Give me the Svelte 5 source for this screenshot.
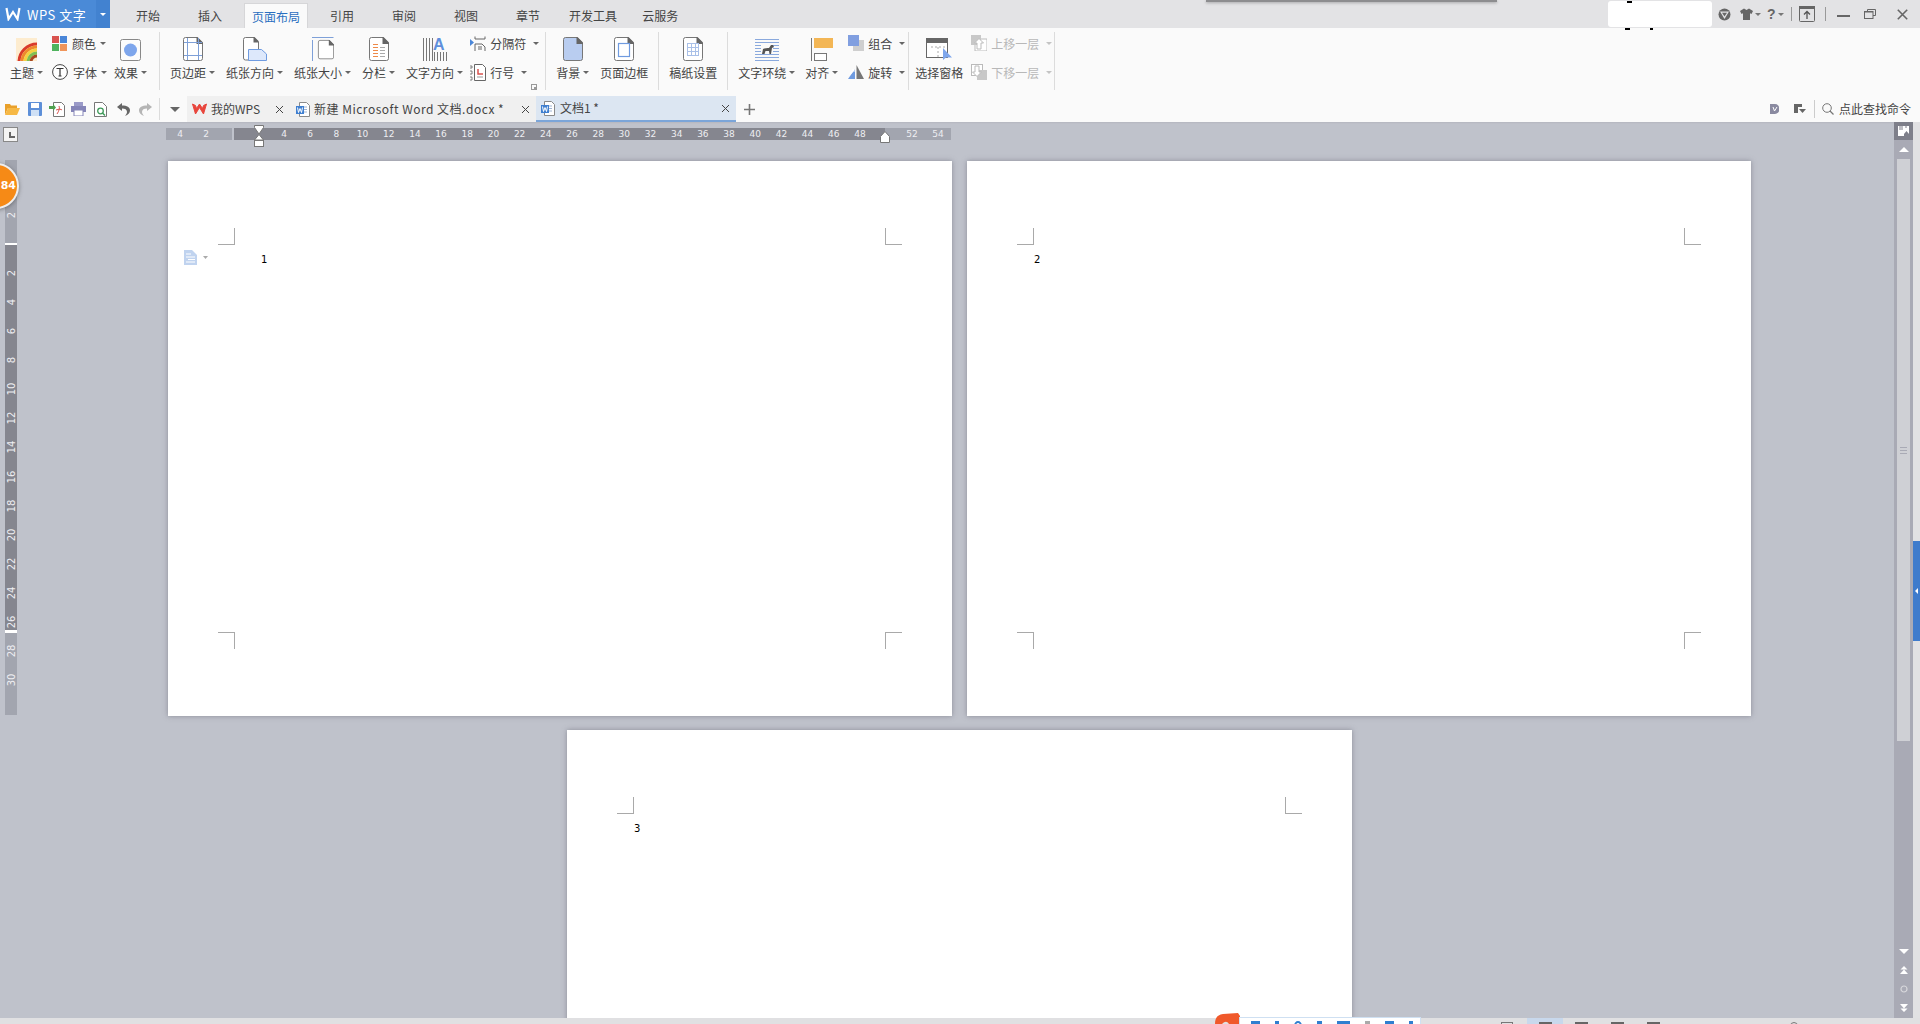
<script>
  const hNums = [
    [180,'4'],[206,'2'],
    ...Array.from({length:23},(_,i)=>[284+i*26.18, String(4+i*2)]),
    [912,'52'],[938,'54']
  ];
  const vNums = [
    [215,'2'],
    ...Array.from({length:15},(_,i)=>[273+i*29.08, String(2+i*2)])
  ];
  const tabs = [
    {t:'开始'},{t:'插入'},{t:'页面布局',cls:'active'},{t:'引用'},{t:'审阅'},{t:'视图'},{t:'章节'},{t:'开发工具',cls:'dev'},{t:'云服务',cls:'cloud'}
  ];
  const pages = [{n:1,cls:'indent'},{n:2,cls:''}];
</script>

{#snippet caret(cls = '')}
  <i class="caret {cls}"></i>
{/snippet}

{#snippet doc(fill = '#fff')}
  <path d="M.5 2.500a2 2 0 0 1 2-2H14l5.500 5.500v15.500a2 2 0 0 1-2 2h-15a2 2 0 0 1-2-2z" fill={fill} stroke="#777"/>
  <path d="M13.500 0h1l5.500 5.500v1.500h-6.500z" fill="#666"/>
{/snippet}

{#snippet wdoc()}
  <svg width="14" height="15" viewBox="0 0 14 15">
    <path d="M3.500.5h7l3 3v11h-10z" fill="#fff" stroke="#8a8a8a"/>
    <path d="M6 5h5M8 7.500h3M8 10h3" stroke="#9fb4d4"/>
    <rect y="4" width="8" height="8" fill="#3f7fd0"/>
    <path d="M1.500 5.500l1 5 1.500-4 1.500 4 1-5" stroke="#fff" fill="none"/>
  </svg>
{/snippet}

{#snippet x()}
  <svg class="close" width="9" height="9" viewBox="0 0 9 9"><path d="M1 1l7 7M8 1l-7 7" stroke="#444" fill="none"/></svg>
{/snippet}

<div class="app">
  <div class="float-edge"></div>

  <header class="title">
    <div class="logo">
      <svg width="16" height="14" viewBox="0 0 16 14"><path d="M1.500 1l2 11 4.500-7 4.500 7 2-11" fill="none" stroke="#fff" stroke-width="2.200"/></svg>
      <span>WPS 文字</span>
    </div>
    <div class="logo-drop"><i class="caret white"></i></div>
    <nav class="tabs">
      {#each tabs as tab}
        <div class="tab {tab.cls ?? ''}">{tab.t}</div>
      {/each}
    </nav>
    <div class="winbtns">
      <div class="blob"><b class="speck a"></b><b class="speck b"></b><b class="speck c"></b></div>
      <svg class="w-shield" width="13" height="13" viewBox="0 0 13 13"><circle cx="6.500" cy="6.500" r="6" fill="#666"/><path d="M2 3.500h9L6.500 11z" fill="#e3e3e5"/><path d="M4 4.800h5L6.500 8.500z" fill="#666"/></svg>
      <svg class="w-shirt" width="13" height="12" viewBox="0 0 13 12"><path d="M4 .5L0 3l1.500 3L3 5.200V12h7V5.200L11.500 6 13 3 9 .5 6.500 2z" fill="#666"/></svg>
      <i class="caret sm"></i>
      <span class="help">?</span>
      <i class="caret sm"></i>
      <span class="wsep first"></span>
      <svg class="w-up" width="16" height="16" viewBox="0 0 16 16"><rect x=".5" y=".5" width="15" height="15" rx="1" fill="none" stroke="#666"/><rect width="16" height="3" fill="#666"/><path d="M8 13V6M5 8.500L8 5.500l3 3" stroke="#555" stroke-width="1.300" fill="none"/></svg>
      <span class="wsep"></span>
      <svg class="w-min" width="13" height="2" viewBox="0 0 13 2"><rect width="13" height="2" fill="#666"/></svg>
      <svg class="w-rest" width="12" height="10" viewBox="0 0 12 10"><path d="M3.500 2.500V.5h8v6H9" fill="none" stroke="#666"/><rect x=".5" y="2.500" width="8.500" height="7" fill="none" stroke="#666"/><rect x="1" y="2" width="8" height="1.500" fill="#666"/></svg>
      <svg class="w-x" width="11" height="11" viewBox="0 0 11 11"><path d="M.8.800l9.400 9.400M10.200.8L.8 10.200" stroke="#666" stroke-width="1.600" fill="none"/></svg>
    </div>
  </header>

  <section class="ribbon">
    <div class="group g1">
      <div class="big">
        <div class="ic">
          <svg width="21" height="23" viewBox="0 0 21 23"><rect width="21" height="23" fill="#fdeccf"/><g fill="none" stroke-width="3"><circle cx="21" cy="24" r="18" stroke="#d93b2b"/><circle cx="21" cy="24" r="15" stroke="#ee8a2c"/><circle cx="21" cy="24" r="12" stroke="#f4d13f"/><circle cx="21" cy="24" r="9" stroke="#7fbf50"/><circle cx="21" cy="24" r="6" stroke="#a8481f"/></g></svg>
        </div>
        <div class="lab"><span>主题</span>{@render caret()}</div>
      </div>
      <div class="smalls">
        <div class="small">
          <svg width="15" height="15" viewBox="0 0 15 15"><rect width="7" height="7" fill="#d9534f"/><rect x="8" width="7" height="7" fill="#4a86d8"/><rect y="8" width="7" height="7" fill="#4fb35e"/><rect x="8" y="8" width="7" height="7" fill="#f0955a"/></svg>
          <span>颜色</span>{@render caret()}
        </div>
        <div class="small">
          <svg width="16" height="16" viewBox="0 0 16 16"><circle cx="8" cy="8" r="7.400" fill="#fff" stroke="#444"/><path d="M4.500 4.500h7M8 4.500v7.500M6.500 12h3" stroke="#333" stroke-width="1.200" fill="none"/></svg>
          <span>字体</span>{@render caret()}
        </div>
      </div>
      <div class="big effect">
        <div class="ic">
          <svg width="21" height="22" viewBox="0 0 21 22"><rect x=".5" y=".5" width="20" height="21" rx="2" fill="#fcfcfc" stroke="#888"/><circle cx="10.500" cy="11" r="6.500" fill="#7ea6ec"/></svg>
        </div>
        <div class="lab"><span>效果</span>{@render caret()}</div>
      </div>
    </div>

    <div class="group g2">
      <div class="big">
        <div class="ic">
          <svg width="20" height="24" viewBox="0 0 20 24">{@render doc()}<path d="M4.500 1v22M15.500 1v22M1 5.500h18M1 18.500h18" stroke="#7ea0d8" fill="none"/></svg>
        </div>
        <div class="lab"><span>页边距</span>{@render caret()}</div>
      </div>
      <div class="big">
        <div class="ic">
          <svg width="24" height="24" viewBox="0 0 24 24"><path d="M.5 2.500a2 2 0 0 1 2-2H11l4.500 4.500v18H2.500a2 2 0 0 1-2-2z" fill="#fff" stroke="#777"/><path d="M10.500 0h1l4 4v1.500h-5z" fill="#666"/><path d="M5.500 12.500h13l5 4.500v6.500h-18z" fill="#dde8fb" stroke="#6f9be0"/></svg>
        </div>
        <div class="lab"><span>纸张方向</span>{@render caret()}</div>
      </div>
      <div class="big">
        <div class="ic">
          <svg width="22" height="24" viewBox="0 0 22 24"><path d="M0 .5h21.500M.5 3v21" stroke="#7ea0d8" fill="none"/><g transform="translate(6 3) scale(.8)">{@render doc()}</g></svg>
        </div>
        <div class="lab"><span>纸张大小</span>{@render caret()}</div>
      </div>
      <div class="big">
        <div class="ic">
          <svg width="20" height="24" viewBox="0 0 20 24">{@render doc()}<path d="M4 7.500h5M4 10.500h5M4 13.500h5M4 16.500h5M4 19.500h5" stroke="#ee8a4a"/><path d="M11 10.500h5M11 13.500h5M11 16.500h5M11 19.500h5" stroke="#aaa"/></svg>
        </div>
        <div class="lab"><span>分栏</span>{@render caret()}</div>
      </div>
      <div class="big">
        <div class="ic">
          <svg class="dirs" width="24" height="24" viewBox="0 0 24 24"><path d="M.5 1v23M3.500 1v23M6.500 1v23M9.500 1v23" stroke="#777"/><text x="10" y="13" font-size="16" font-family="Liberation Sans" font-weight="bold" fill="#5f8fdc">A</text><path d="M11.500 15v9M14.500 15v9M17.500 15v9M20.500 15v9M23.500 15v9" stroke="#777"/></svg>
        </div>
        <div class="lab"><span>文字方向</span>{@render caret()}</div>
      </div>
      <div class="smalls pull">
        <div class="small tight">
          <svg width="16" height="15" viewBox="0 0 16 15"><path d="M0 3l4 3.500L0 10z" fill="#4a86d8"/><path d="M5 .5V3h10V.5M5 15V8h7l3 3v4M8 11h4M8 13h4" fill="none" stroke="#666"/></svg>
          <span>分隔符</span>{@render caret()}
        </div>
        <div class="small tight">
          <svg width="16" height="17" viewBox="0 0 16 17"><path d="M4.500.5h8l3 3v13h-11z" fill="#fff" stroke="#666"/><path d="M8 5v5h5" fill="none" stroke="#d9534f" stroke-width="1.500"/><path d="M7 13h6" stroke="#999"/><path d="M0 2h2v2H0M0 7h2v3H0M0 13h2v3H0" stroke="#666" fill="none" stroke-width=".8"/></svg>
          <span>行号</span>{@render caret()}
        </div>
      </div>
      <svg class="launcher" width="6" height="6" viewBox="0 0 6 6"><rect x=".5" y=".5" width="5" height="5" fill="none" stroke="#999"/><rect x="3" y="3" width="3" height="3" fill="#999"/></svg>
    </div>

    <div class="group">
      <div class="big">
        <div class="ic">
          <svg width="20" height="24" viewBox="0 0 20 24">{@render doc('#b9cdf0')}</svg>
        </div>
        <div class="lab"><span>背景</span>{@render caret()}</div>
      </div>
      <div class="big">
        <div class="ic">
          <svg width="20" height="24" viewBox="0 0 20 24">{@render doc()}<rect x="4.500" y="6.500" width="11" height="13" fill="none" stroke="#6f9be0" stroke-width="1.200"/></svg>
        </div>
        <div class="lab"><span>页面边框</span></div>
      </div>
    </div>

    <div class="group">
      <div class="big">
        <div class="ic">
          <svg width="20" height="24" viewBox="0 0 20 24">{@render doc()}<path d="M4 6.500h12M4 10.500h12M4 14.500h12M4 18.500h12M4.500 6v13M8.500 6v13M12.500 6v13M15.500 6v13" stroke="#a9c0e8" fill="none"/></svg>
        </div>
        <div class="lab"><span>稿纸设置</span></div>
      </div>
    </div>

    <div class="group g5">
      <div class="big">
        <div class="ic">
          <svg width="26" height="22" viewBox="0 0 26 22"><path d="M1 .5h24M1 3.500h24M1 6.500h6M19 6.500h6M1 9.500h6M19 9.500h6M1 12.500h6M19 12.500h6M1 15.500h24M1 18.500h24M1 21.500h24" stroke="#8aa9dd"/><path d="M8 15l1-5c1-1 5-1 6-1l2-3h2l1 2-2 1-1 6h-1.500l-.5-3h-3.500l-1 3z" fill="#555"/></svg>
        </div>
        <div class="lab"><span>文字环绕</span>{@render caret()}</div>
      </div>
      <div class="big">
        <div class="ic">
          <svg width="22" height="24" viewBox="0 0 22 24"><path d="M.5 1v23" stroke="#777"/><rect x="3" y="1" width="19" height="10" fill="#f3b655"/><rect x="3.500" y="16.500" width="12" height="7" fill="#fff" stroke="#777"/></svg>
        </div>
        <div class="lab"><span>对齐</span>{@render caret()}</div>
      </div>
      <div class="smalls">
        <div class="small tight">
          <svg width="16" height="16" viewBox="0 0 16 16"><rect x="5" y="5" width="11" height="11" fill="#cfcfcf"/><rect width="11" height="11" fill="#819fe0"/></svg>
          <span>组合</span>{@render caret()}
        </div>
        <div class="small tight">
          <svg width="16" height="16" viewBox="0 0 16 16"><path d="M0 15l7-10v10z" fill="#6f9be0"/><path d="M8.500 1L16 15H8.500z" fill="#777"/><path d="M1.500 9l3-3.500L3.500 5h3v3l-1-.8-3 3.500z" fill="#fff"/></svg>
          <span>旋转</span>{@render caret()}
        </div>
      </div>
    </div>
    <div class="group last">
      <div class="big">
        <div class="ic">
          <svg width="26" height="24" viewBox="0 0 26 24"><rect x=".5" y="1.500" width="21" height="19" fill="#fff" stroke="#666"/><rect y="1" width="22" height="5" fill="#666"/><path d="M5 10h14M12 10v10" stroke="#aaa" stroke-dasharray="2 2"/><path d="M17 11v12l3-2.500h6z" fill="#7ea6ec"/></svg>
        </div>
        <div class="lab"><span>选择窗格</span></div>
      </div>
      <div class="smalls dim">
        <div class="small tight">
          <svg width="16" height="16" viewBox="0 0 16 16"><rect x="4" y="4" width="12" height="12" fill="#fff" stroke="#bbb"/><rect width="10" height="10" fill="#c8c8c8"/><path d="M6 14V8H3.500L8 3.500 12.500 8H10v6z" fill="#fff" stroke="#bbb"/></svg>
          <span>上移一层</span>{@render caret('light')}
        </div>
        <div class="small tight">
          <svg width="16" height="16" viewBox="0 0 16 16"><rect x=".5" y=".5" width="11" height="11" fill="#fff" stroke="#bbb"/><rect x="6" y="6" width="10" height="10" fill="#c8c8c8"/><path d="M4 2v6H1.500L6 12.500 10.500 8H8V2z" fill="#fff" stroke="#bbb"/></svg>
          <span>下移一层</span>{@render caret('light')}
        </div>
      </div>
    </div>
  </section>

  <section class="qa">
    <div class="qa-icons">
      <svg width="15" height="12" viewBox="0 0 15 12"><path d="M0 1h5l1 1.500h6V5H3L0 12z" fill="#e9a02a"/><path d="M3 5h12l-3 7H0z" fill="#f6b845"/></svg>
      <svg width="14" height="14" viewBox="0 0 14 14"><rect width="14" height="14" rx="1" fill="#5d8fd8"/><rect x="3" y="1" width="8" height="5" fill="#fff"/><rect x="3" y="8" width="8" height="6" fill="#cfe0f5"/></svg>
      <svg width="16" height="15" viewBox="0 0 16 15"><path d="M4.500.5h8l3 3v11h-11z" fill="#fff" stroke="#777"/><path d="M0 4h4V2l3 3.500L4 9V7H0z" fill="#4fa04f"/><path d="M8 12c2-3 3-6 2-8M7 8c3-1 5-1 6 0" stroke="#d9534f" fill="none"/></svg>
      <svg width="15" height="14" viewBox="0 0 15 14"><rect x="3" width="9" height="4" fill="#9a9ac8"/><rect y="4" width="15" height="6" fill="#8585b8"/><rect x="3" y="8" width="9" height="6" fill="#fff" stroke="#8585b8"/></svg>
      <svg width="13" height="15" viewBox="0 0 13 15"><path d="M.5.500h8l4 4v10H.5z" fill="#fff" stroke="#777"/><circle cx="6.500" cy="9" r="2.800" fill="none" stroke="#3f9a5a" stroke-width="1.300"/><path d="M8.500 11l2.500 2.500" stroke="#3f9a5a" stroke-width="1.500"/></svg>
      <svg width="13" height="13" viewBox="0 0 13 13"><path d="M5 0L0 4l5 4V5.500c3 0 5 1 5 3.500 0 1.500-1 2.500-2 4 3-1 5-3 5-5.500C13 4 10 2.500 5 2.500z" fill="#666"/></svg>
      <svg width="13" height="13" viewBox="0 0 13 13"><path d="M8 0l5 4-5 4V5.500C5 5.500 3 6.500 3 9c0 1.500 1 2.500 2 4-3-1-5-3-5-5.500C0 4 3 2.500 8 2.500z" fill="#b5b5b5"/></svg>
    </div>
    <span class="qa-sep"></span>
    <i class="dd"></i>
    <div class="doc-tabs">
      <div class="dtab wps">
        <svg width="15" height="12" viewBox="0 0 15 12"><path d="M.5 1l3 10 4-6.500 4 6.500 3-10-3 1.500-1 3L7.500 1 4.500 5.500l-1-3z" fill="#e8453c" stroke="#e8453c"/></svg>
        <span>我的WPS</span>{@render x()}
      </div>
      <div class="dtab new">
        {@render wdoc()}
        <span>新建 Microsoft Word 文档.docx *</span>{@render x()}
      </div>
      <div class="dtab cur">
        {@render wdoc()}
        <span>文档1 *</span>{@render x()}
      </div>
    </div>
    <svg class="plus" width="13" height="13" viewBox="0 0 13 13"><path d="M6.500 1v11M1 6.500h11" stroke="#777" stroke-width="1.600"/></svg>
    <div class="qa-right">
      <svg width="9" height="10" viewBox="0 0 9 10"><path d="M0 0h5a4.500 5 0 0 1 0 10H0z" fill="#8a8aa0"/><path d="M3 3l1.500 4L7 3" stroke="#fff" fill="none"/></svg>
      <svg class="flag" width="12" height="10" viewBox="0 0 12 10"><path d="M0 0h8v3H4v6H0z" fill="#666"/><path d="M5 5h7L8.500 9z" fill="#666"/></svg>
      <span class="qa-sep2"></span>
      <svg width="12" height="12" viewBox="0 0 12 12"><circle cx="5" cy="5" r="4.300" fill="none" stroke="#777"/><path d="M8 8l3.500 3.500" stroke="#777" stroke-width="1.300"/></svg>
      <span class="find">点此查找命令</span>
    </div>
  </section>

  <main class="work">
    <aside class="left">
      <div class="tabstop"><i></i></div>
      <div class="vruler">
        <b class="v-light top"></b><b class="v-dark"></b><b class="v-light bottom"></b>
        {#each vNums as [y, s]}
          <span class="vnum" style="top:{y - 160}px">{s}</span>
        {/each}
      </div>
      <div class="badge">84</div>
    </aside>

    <div class="center">
      <div class="hruler">
        <b class="h-light l"></b><b class="h-dark"></b><b class="h-light r"></b>
        {#each hNums as [px, s]}
          <span class="hnum" style="left:{px - 166}px">{s}</span>
        {/each}
        <svg class="m-left" width="10" height="22" viewBox="0 0 10 22"><path d="M.5.500h9v2L5 9 .5 2.500z" fill="#fff" stroke="#777"/><path d="M5 9.500l4.500 5.500h-9z" fill="#fff" stroke="#777"/><rect x=".5" y="15.500" width="9" height="6" fill="#fff" stroke="#777"/></svg>
        <svg class="m-right" width="10" height="12" viewBox="0 0 10 12"><path d="M5 .5L9.500 5.500v6h-9v-6z" fill="#fff" stroke="#777"/></svg>
      </div>

      <div class="row">
        {#each pages as p}
          <article class="page">
            <div class="margin">
              <b class="cm tl"></b><b class="cm tr"></b><b class="cm bl"></b><b class="cm br"></b>
              <p class="num {p.cls}">{p.n}</p>
            </div>
            {#if p.n === 1}
              <svg class="parag" width="24" height="15" viewBox="0 0 24 15"><path d="M0 0h8l5 5v10H0z" fill="#c0d3ef"/><path d="M2 4h5M2 7h9M4 9.500h7M2 12h9" stroke="#fff"/><path d="M19 6h5l-2.500 3z" fill="#aaa"/></svg>
            {/if}
          </article>
        {/each}
      </div>
      <article class="page third">
        <div class="margin">
          <b class="cm tl"></b><b class="cm tr"></b><b class="cm bl"></b><b class="cm br"></b>
          <p class="num">3</p>
        </div>
      </article>
    </div>

    <div class="scroll">
      <div class="s-top">
        <svg width="11" height="10" viewBox="0 0 11 10"><rect width="11" height="10" fill="#fff"/><path d="M2 0v4M4 0v4M8 0v2" stroke="#7e7f8a"/><path d="M6 8l2.500-3L11 8v2H6z" fill="#7e7f8a"/></svg>
      </div>
      <i class="up"></i>
      <div class="thumb"><b></b><b></b><b></b></div>
      <div class="s-bot">
        <i class="down"></i>
        <svg width="8" height="8" viewBox="0 0 8 8"><path d="M4 0l3.500 3.500h-7zM4 3.500L8 8H0z" fill="#fff"/></svg>
        <svg width="8" height="8" viewBox="0 0 8 8"><circle cx="4" cy="4" r="3" fill="none" stroke="#d8d8dc" stroke-width="1.200"/></svg>
        <svg width="8" height="8" viewBox="0 0 8 8"><path d="M0 0h8L4 4.500zM.5 4.500h7L4 8z" fill="#fff"/></svg>
      </div>
    </div>

    <div class="strip">
      <div class="handle"><i></i></div>
    </div>
  </main>

  <footer class="status">
    <span class="s-br"></span>
    <span class="s-ic on"><b></b></span>
    <span class="s-ic"><b></b></span>
    <span class="s-ic"><b></b></span>
    <span class="s-ic"><b></b></span>
    <span class="s-knob"></span>
  </footer>

  <div class="tray">
    <svg class="t-logo" width="25" height="11" viewBox="0 0 25 11"><path d="M0 11C0 5 2 2 8 1l15-1 2 3v8H14c-2-3-4-3-7 0z" fill="#f0592b"/></svg>
    <div class="t-panel">
      <i></i><i class="sm"></i><i class="ring"></i><i class="dot"></i><i class="bar"></i><i class="gr"></i><i></i><i class="sm"></i>
    </div>
  </div>
</div>

<style>
  :global(body) { margin: 0; overflow: hidden; }
  .app {
    position: relative;
    width: 1920px; height: 1024px;
    display: flex; flex-direction: column;
    overflow: hidden;
    font-family: "Noto Sans CJK SC", "Noto Sans", sans-serif;
    font-size: 12px; color: #444;
    background: #bfc2cb;
  }
  .caret { display: inline-block; width: 0; height: 0; border: 3px solid transparent; border-top: 3px solid #666; border-bottom: 0; flex: none; }
  .caret.white { border-top-color: #fff; border-width: 3px; border-bottom: 0; }
  .caret.sm { border-top-color: #777; margin-left: 2px; }
  .caret.light { border-top-color: #c4c4c4; }

  .float-edge { position: absolute; left: 1206px; top: 0; width: 291px; height: 2px; background: #8d8d8f; box-shadow: 0 1px 3px rgba(0,0,0,.3); }

  .title { height: 28px; flex: none; display: flex; background: #e3e3e5; }
  .logo { width: 96px; display: flex; align-items: center; gap: 6px; padding-left: 5px; box-sizing: border-box; background: #4a8ad7; color: #fff; font-size: 13px; letter-spacing: .5px; }
  .logo-drop { width: 14px; display: flex; align-items: center; justify-content: center; background: #4282d0; }
  .tabs { display: flex; gap: 22px; margin-left: 18px; align-items: flex-end; height: 28px; }
  .tab { height: 25px; padding: 0 8px; line-height: 25px; }
  .tab.active { margin: 0 -8px; background: #fafafa; border: solid #d6d6d8; border-width: 1px 1px 0; box-sizing: border-box; padding: 0 7px; color: #2a6fc0; }
  .tab.dev { margin-left: -9px; }
  .tab.cloud { margin-left: -13px; }
  .winbtns { margin-left: auto; display: flex; align-items: center; position: relative; width: 312px; height: 28px; }
  .blob { position: relative; width: 104px; height: 26px; margin-top: -1px; background: #fff; border-radius: 3px; flex: none; }
  .speck { position: absolute; background: #000; height: 2px; }
  .speck.a { left: 19px; top: 0; width: 5px; }
  .speck.b { left: 17px; top: 27px; width: 5px; }
  .speck.c { left: 42px; top: 27px; width: 3px; }
  .w-shield { margin-left: 6px; }
  .w-shirt { margin-left: 9px; }
  .help { margin-left: 6px; font: bold 14px "Liberation Sans", sans-serif; color: #666; }
  .wsep { width: 1px; height: 14px; background: #999; margin-left: 10px; flex: none; }
  .wsep.first { margin-left: 7px; }
  .w-up { margin-left: 7px; }
  .w-min { margin-left: 11px; margin-top: 3px; }
  .w-rest { margin-left: 14px; }
  .w-x { margin-left: 21px; }

  .ribbon { height: 68px; flex: none; box-sizing: border-box; padding-top: 4px; display: flex; align-items: flex-start; background: #fafafa; }
  .group { position: relative; height: 58px; display: flex; gap: 11px; padding: 0 10px; border-right: 1px solid #dcdcdc; box-sizing: content-box; }
  .g1 { gap: 9px; padding-right: 12px; }
  .effect { margin-left: -2px; }
  .g2 { padding-right: 6px; }
  .g5 { padding-right: 3px; gap: 10px; }
  .group.last { padding-left: 6px; padding-right: 2px; gap: 8px; }
  .big { display: flex; flex-direction: column; align-items: center; }
  .ic { height: 29px; display: flex; align-items: flex-end; justify-content: center; }
  .dirs { overflow: visible; }
  .lab { height: 22px; display: flex; align-items: center; gap: 3px; white-space: nowrap; }
  .smalls { display: flex; flex-direction: column; gap: 7px; }
  .smalls.pull { margin-left: -4px; }
  .small { height: 22px; display: flex; align-items: center; gap: 5px; white-space: nowrap; }
  .small span { margin-right: -1px; }
  .small.tight { gap: 4px; }
  .small.tight span { margin-right: 3px; }
  .dim { color: #b8b8b8; }
  .launcher { position: absolute; right: 8px; bottom: 0; }

  .qa { height: 26px; flex: none; display: flex; align-items: center; background: #fafafa; position: relative; }
  .qa-icons { display: flex; align-items: center; gap: 6px; padding-left: 5px; width: 147px; box-sizing: content-box; }
  .qa-icons svg:nth-child(2) { margin-left: 2px; }
  .qa-icons svg:nth-child(3) { margin-left: 1px; }
  .qa-icons svg:nth-child(5) { margin-left: 2px; }
  .qa-icons svg:nth-child(6) { margin-left: 4px; }
  .qa-icons svg:nth-child(7) { margin-left: 3px; }
  .qa-sep { width: 1px; height: 22px; background: #dcdcdc; margin-left: 7px; flex: none; }
  .dd { width: 0; height: 0; border: 5px solid transparent; border-top: 5px solid #666; border-bottom: 0; margin-left: 10px; flex: none; }
  .doc-tabs { display: flex; height: 26px; margin-left: 7px; }
  .dtab { display: flex; align-items: center; height: 26px; box-sizing: border-box; white-space: nowrap; position: relative; background: #f0f0f0; font-size: 12px; }
  .dtab span { margin-bottom: 2px; }
  .dtab .close { position: absolute; }
  .dtab.wps { width: 103px; padding-left: 5px; gap: 4px; }
  .dtab.wps .close { left: 88px; }
  .dtab.new { width: 246px; padding-left: 6px; gap: 4px; letter-spacing: .5px; }
  .dtab.new .close { left: 231px; }
  .dtab.cur { width: 200px; padding-left: 5px; gap: 5px; background: #dce6f2; border-bottom: 2px solid #7ba5d9; }
  .dtab.cur .close { left: 185px; }
  .plus { margin-left: 7px; }
  .qa-right { margin-left: auto; display: flex; align-items: center; padding-right: 9px; }
  .flag { margin-left: 15px; }
  .qa-sep2 { width: 1px; height: 18px; background: #ccc; margin: 0 7px 0 8px; }
  .find { margin-left: 5px; margin-bottom: 2px; }

  .work { flex: 1; min-height: 0; display: flex; overflow: hidden; background: #bfc2cb; box-shadow: inset 0 2px 2px -2px rgba(90,90,100,.3); }
  .left { width: 168px; flex: none; position: relative; }
  .tabstop { width: 13px; height: 13px; margin: 5px 0 0 3px; border: 1px solid #888; background: #f4f4f4; position: relative; }
  .tabstop i { position: absolute; left: 5px; top: 4px; width: 2px; height: 6px; background: #666; }
  .tabstop i::after { content: ""; position: absolute; left: 0; bottom: 0; width: 6px; height: 2px; background: #666; }
  .vruler { position: relative; width: 12px; height: 555px; margin: 18px 0 0 5px; display: flex; flex-direction: column; background: #fff; }
  .v-light { background: #a2a5af; flex: none; display: block; }
  .v-light.top { height: 83px; margin-bottom: 2px; }
  .v-light.bottom { height: 82px; margin-top: 3px; }
  .v-dark { height: 385px; background: #85868f; flex: none; display: block; }
  .vnum { position: absolute; left: 6px; transform: translate(-50%,-50%) rotate(-90deg); font: 10px "DejaVu Sans", sans-serif; color: #eeeef2; }
  .badge { position: absolute; left: -27px; top: 41px; width: 46px; height: 46px; box-sizing: border-box; border-radius: 50%; border: 2px solid #eee; background: #f68a16; box-shadow: 0 1px 4px rgba(60,60,60,.55); color: #fff; font: bold 11px/42px "DejaVu Sans", sans-serif; text-align: right; padding-right: 1px; }

  .center { width: 1726px; flex: none; }
  .hruler { position: relative; width: 785px; height: 12px; margin: 6px 0 21px -2px; display: flex; }
  .h-light { display: block; background: #a2a5af; height: 12px; flex: none; }
  .h-light.l { width: 66px; margin-right: 2px; }
  .h-dark { display: block; background: #85868f; width: 651px; height: 12px; flex: none; }
  .h-light.r { width: 66px; }
  .hnum { position: absolute; top: 6px; transform: translate(-50%,-50%); font: 9px "DejaVu Sans", sans-serif; color: #eeeef2; }
  .m-left { position: absolute; left: 88px; top: -3px; }
  .m-right { position: absolute; left: 714px; top: 3px; }

  .row { display: flex; gap: 15px; }
  .page { position: relative; flex: none; width: 784px; height: 555px; background: #fff; box-shadow: 0 0 5px rgba(95,95,110,.55); box-sizing: border-box; padding: 84px 67px; }
  .page.third { margin: 14px 0 0 399px; width: 785px; }
  .margin { position: relative; height: 100%; display: flow-root; }
  .cm { position: absolute; width: 16px; height: 16px; border: 0 solid #a9a9a9; }
  .cm.tl { left: -17px; top: -17px; border-width: 0 1px 1px 0; }
  .cm.tr { right: -17px; top: -17px; border-width: 0 0 1px 1px; }
  .cm.bl { left: -17px; bottom: -17px; border-width: 1px 1px 0 0; }
  .cm.br { right: -17px; bottom: -17px; border-width: 1px 0 0 1px; }
  .num { margin: 6px 0 0 0; font: 10px/18px "DejaVu Sans", sans-serif; color: #000; }
  .num.indent { padding-left: 26px; }
  .parag { position: absolute; left: 16px; top: 89px; }

  .scroll { width: 19px; flex: none; background: #a9aab5; display: flex; flex-direction: column; align-items: center; }
  .s-top { width: 19px; height: 18px; background: #7e7f8a; display: flex; align-items: center; justify-content: center; flex: none; }
  .up { margin-top: 7px; width: 0; height: 0; border: 5px solid transparent; border-bottom: 5px solid #fff; border-top: 0; flex: none; }
  .thumb { margin-top: 7px; width: 13px; height: 582px; background: #cfd0d5; display: flex; flex-direction: column; align-items: center; justify-content: center; gap: 2px; flex: none; }
  .thumb b { width: 7px; height: 1px; background: #a9aab5; display: block; }
  .s-bot { display: flex; flex-direction: column; align-items: center; gap: 11px; margin-top: auto; padding-bottom: 6px; }
  .down { width: 0; height: 0; border: 5px solid transparent; border-top: 5px solid #fff; border-bottom: 0; margin-bottom: 1px; }
  .strip { width: 7px; flex: none; background: #e1e1e3; padding-top: 419px; box-sizing: border-box; }
  .handle { height: 100px; background: #3e7bcc; display: flex; align-items: center; justify-content: center; }
  .handle i { width: 0; height: 0; border: 3px solid transparent; border-right: 3px solid #fff; border-left: 0; }

  .status { height: 6px; flex: none; background: #e0e0e2; display: flex; overflow: hidden; padding-left: 1501px; position: relative; }
  .s-br { width: 10px; height: 4px; margin-top: 4px; border: 1px solid #777; border-bottom: 0; }
  .s-ic { width: 36px; height: 6px; display: flex; justify-content: center; flex: none; }
  .s-ic b { display: block; width: 13px; height: 2px; margin-top: 4px; background: #666; }
  .s-ic.on { background: #c8d8ec; margin-left: 14px; }
  .s-knob { width: 8px; height: 8px; border: 1px solid #777; border-radius: 50%; margin: 4px 0 0 119px; box-sizing: border-box; flex: none; }

  .tray { position: absolute; left: 1215px; top: 1013px; display: flex; align-items: flex-end; }
  .t-logo { display: block; }
  .t-panel { width: 182px; height: 7px; margin-left: -1px; box-sizing: border-box; background: #fff; border: 1px solid #cfe0f2; border-bottom: 0; display: flex; gap: 15px; padding: 3px 0 0 11px; overflow: hidden; }
  .t-panel i { display: block; width: 9px; height: 6px; background: #2f7fd0; flex: none; }
  .t-panel i.sm { width: 4px; }
  .t-panel i.ring { width: 8px; background: none; border: 2px solid #2f7fd0; border-radius: 50%; box-sizing: border-box; height: 10px; }
  .t-panel i.dot { width: 5px; }
  .t-panel i.bar { width: 13px; }
  .t-panel i.gr { width: 5px; background: #aaa; }
</style>
